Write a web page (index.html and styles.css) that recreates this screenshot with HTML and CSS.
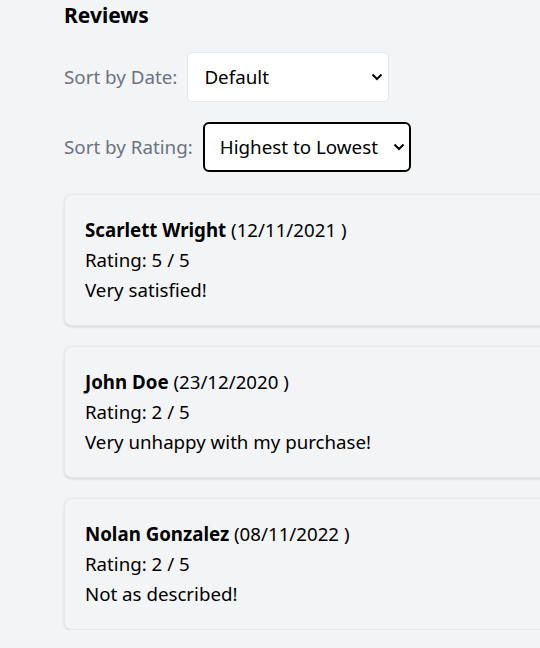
FILE: index.html
```html
<!DOCTYPE html>
<html>
<head>
<meta charset="utf-8">
<link rel="stylesheet" href="styles.css">
</head>
<body>
<main class="page">
  <h2 class="title">Reviews</h2>
  <div class="sort-row">
    <label class="sort-label">Sort by Date:</label>
    <span class="select-wrap">
      <select class="select select-date"><option>Default</option></select>
      <svg class="chev" width="12" height="8" viewBox="0 0 12 8"><path d="M1.5 1.5 L6 6 L10.5 1.5" fill="none" stroke="#000" stroke-width="2"/></svg>
    </span>
  </div>
  <div class="sort-row">
    <label class="sort-label">Sort by Rating:</label>
    <span class="select-wrap">
      <select class="select select-rating"><option>Highest to Lowest</option></select>
      <svg class="chev" width="12" height="8" viewBox="0 0 12 8"><path d="M1.5 1.5 L6 6 L10.5 1.5" fill="none" stroke="#000" stroke-width="2"/></svg>
    </span>
  </div>
  <div class="reviews">
    <div class="card">
      <p class="line"><b class="name">Scarlett Wright</b> (12/11/2021 )</p>
      <p class="line">Rating: 5 / 5</p>
      <p class="line">Very satisfied!</p>
    </div>
    <div class="card">
      <p class="line"><b class="name">John Doe</b> (23/12/2020 )</p>
      <p class="line">Rating: 2 / 5</p>
      <p class="line">Very unhappy with my purchase!</p>
    </div>
    <div class="card">
      <p class="line"><b class="name">Nolan Gonzalez</b> (08/11/2022 )</p>
      <p class="line">Rating: 2 / 5</p>
      <p class="line">Not as described!</p>
    </div>
  </div>
</main>
</body>
</html>
```
FILE: styles.css
```css
html, body {
  margin: 0;
  padding: 0;
  background: #f3f4f6;
  overflow: hidden;
}
body {
  font-family: "Noto Sans", "Open Sans", sans-serif;
  color: #111;
}
.page {
  padding-left: 64px;
}
.title {
  margin: 0;
  padding-top: 2px;
  font-size: 21px;
  line-height: 26px;
  font-weight: 700;
  color: #000;
}
.sort-row {
  display: flex;
  align-items: center;
  gap: 10px;
  margin-top: 20px;
}
.sort-row:first-of-type {
  margin-top: 24px;
}
.sort-label {
  font-size: 18.8px;
  line-height: 26px;
  color: #6b7280;
}
.select-wrap {
  position: relative;
  display: block;
  height: 50px;
}
.select {
  appearance: none;
  -webkit-appearance: none;
  display: block;
  box-sizing: border-box;
  font-family: inherit;
  font-size: 18.8px;
  color: #000;
  background: #fff;
  height: 50px;
  padding: 0 26px 0 16px;
  margin: 0;
  outline: none;
}
.select-date {
  width: 202px;
  border: 1px solid #e5e7eb;
  border-radius: 5px;
}
.select-rating {
  width: 208px;
  border: 2px solid #000;
  border-radius: 6px;
  padding-left: 15px;
}
.chev {
  position: absolute;
  right: 6px;
  top: 21px;
  pointer-events: none;
}
.reviews {
  display: flex;
  flex-direction: column;
  gap: 20px;
  margin-top: 22px;
}
.card {
  width: 520px;
  box-sizing: border-box;
  padding: 20px;
  border: 1px solid #e5e7eb;
  border-radius: 8px;
  background: #f3f4f6;
  box-shadow: 0 1px 3px rgba(0,0,0,0.12);
}
.line {
  margin: 0;
  font-size: 18.7px;
  line-height: 30px;
  color: #000;
}
.name {
  font-weight: 700;
}
```
